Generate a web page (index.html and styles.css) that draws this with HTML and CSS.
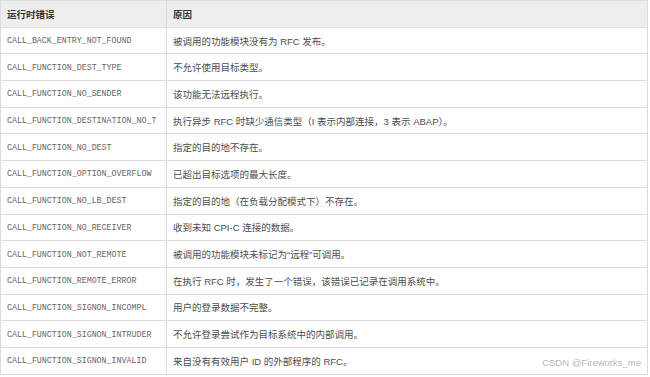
FILE: index.html
```html
<!DOCTYPE html>
<html lang="zh">
<head>
<meta charset="utf-8">
<link rel="stylesheet" href="styles.css">
</head>
<body>
<div class="wrap">
<table class="errors">
<thead>
<tr><th class="c1">运行时错误</th><th class="c2">原因</th></tr>
</thead>
<tbody>
<tr><td class="code">CALL_BACK_ENTRY_NOT_FOUND</td><td class="why">被调用的功能模块没有为 RFC 发布。</td></tr>
<tr><td class="code">CALL_FUNCTION_DEST_TYPE</td><td class="why">不允许使用目标类型。</td></tr>
<tr><td class="code">CALL_FUNCTION_NO_SENDER</td><td class="why">该功能无法远程执行。</td></tr>
<tr><td class="code">CALL_FUNCTION_DESTINATION_NO_T</td><td class="why">执行异步 RFC 时缺少通信类型（I 表示内部连接，3 表示 ABAP）。</td></tr>
<tr><td class="code">CALL_FUNCTION_NO_DEST</td><td class="why">指定的目的地不存在。</td></tr>
<tr><td class="code">CALL_FUNCTION_OPTION_OVERFLOW</td><td class="why">已超出目标选项的最大长度。</td></tr>
<tr><td class="code">CALL_FUNCTION_NO_LB_DEST</td><td class="why">指定的目的地（在负载分配模式下）不存在。</td></tr>
<tr><td class="code">CALL_FUNCTION_NO_RECEIVER</td><td class="why">收到未知 CPI-C 连接的数据。</td></tr>
<tr><td class="code">CALL_FUNCTION_NOT_REMOTE</td><td class="why">被调用的功能模块未标记为“远程”可调用。</td></tr>
<tr><td class="code">CALL_FUNCTION_REMOTE_ERROR</td><td class="why">在执行 RFC 时，发生了一个错误，该错误已记录在调用系统中。</td></tr>
<tr><td class="code">CALL_FUNCTION_SIGNON_INCOMPL</td><td class="why">用户的登录数据不完整。</td></tr>
<tr><td class="code">CALL_FUNCTION_SIGNON_INTRUDER</td><td class="why">不允许登录尝试作为目标系统中的内部调用。</td></tr>
<tr><td class="code">CALL_FUNCTION_SIGNON_INVALID</td><td class="why">来自没有有效用户 ID 的外部程序的 RFC。</td></tr>
</tbody>
</table>
<span class="mark">CSDN @Fireworks_me</span>
</div>
</body>
</html>
```
FILE: styles.css
```css
html, body {
  margin: 0;
  padding: 0;
  background: #ffffff;
}
.wrap {
  position: relative;
  width: 650px;
  height: 377px;
  overflow: hidden;
}
.errors {
  border-collapse: collapse;
  width: 648px;
  table-layout: fixed;
  font-family: "Liberation Sans", "Noto Sans CJK SC", sans-serif;
}
.errors th, .errors td {
  border: 1px solid #dddddd;
  height: 25.7px;
  padding: 0 0 0 6px;
  text-align: left;
  vertical-align: middle;
  white-space: nowrap;
  overflow: hidden;
}
.errors th {
  background: #eeeeee;
  color: #333333;
  font-size: 9.5px;
  font-weight: bold;
}
.c1 { width: 159px; }
.code {
  font-family: "Liberation Mono", monospace;
  font-size: 8.3px;
  color: #666666;
}
.why {
  font-size: 9.5px;
  color: #4d4d4d;
}
.mark {
  position: absolute;
  right: 9px;
  bottom: 9px;
  font-family: "Liberation Sans", sans-serif;
  font-size: 9.5px;
  color: #b8b8b8;
}
```
